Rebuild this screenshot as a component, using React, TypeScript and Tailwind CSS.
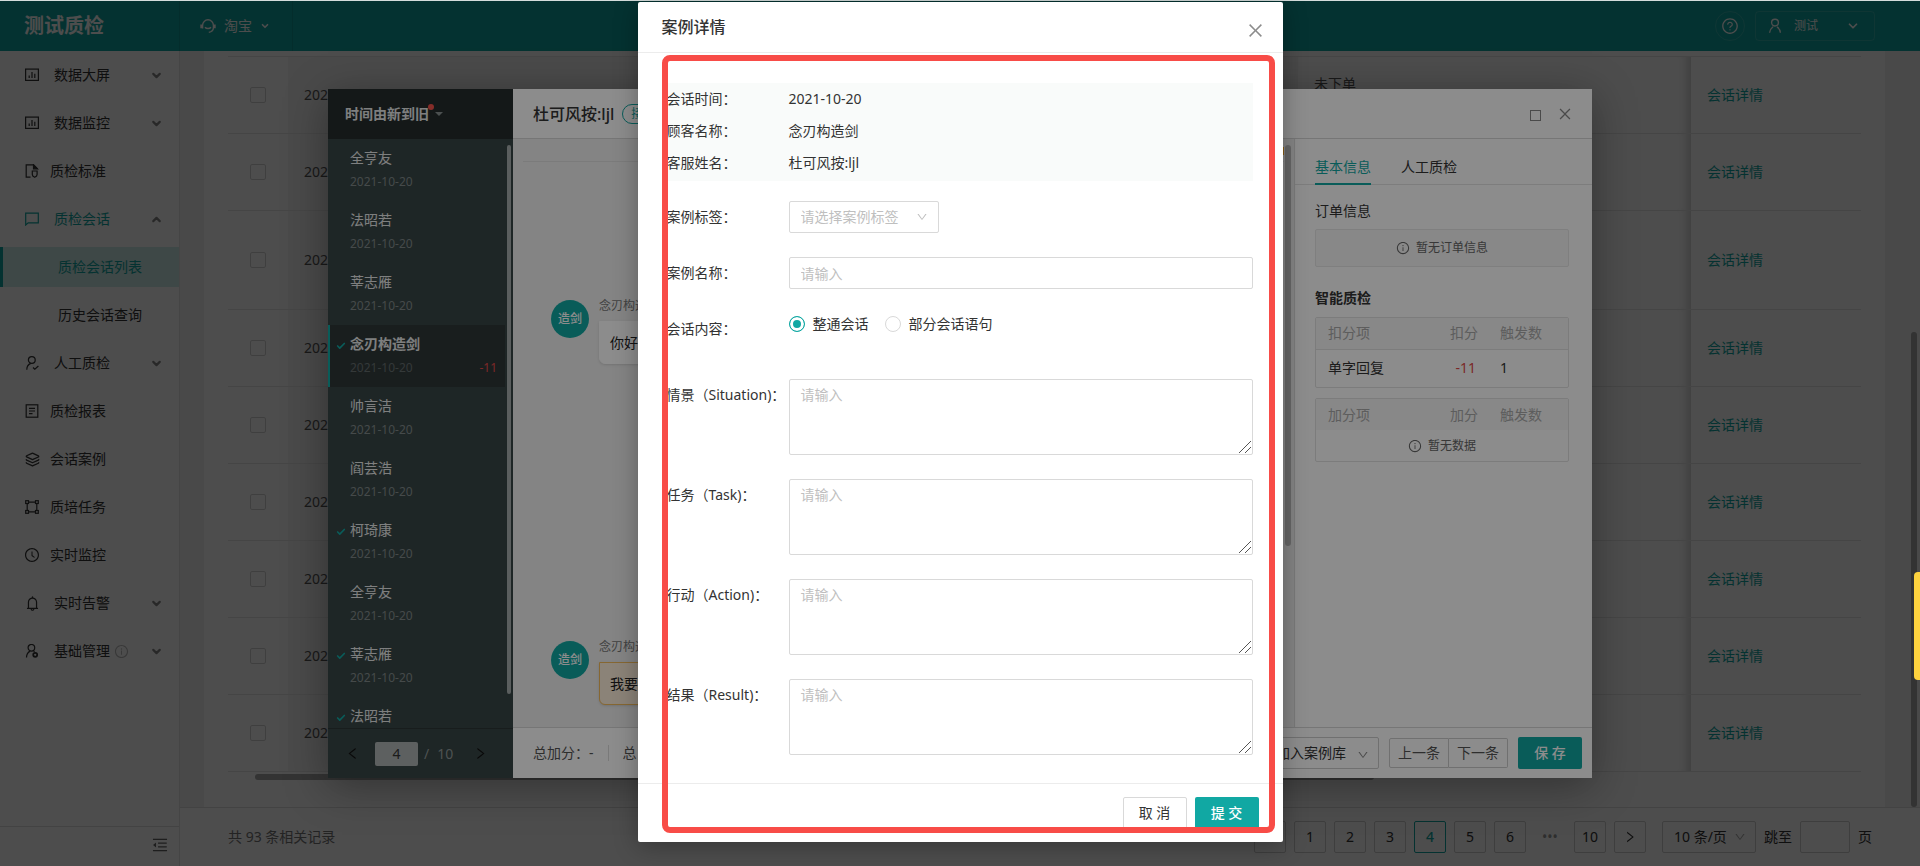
import type { ReactNode } from "react";
import {
  AiOutlineBell,
  AiOutlineClockCircle,
  AiOutlineClose,
  AiOutlineDown,
  AiOutlineInfoCircle,
  AiOutlineLeft,
  AiOutlineMenuFold,
  AiOutlineQuestionCircle,
  AiOutlineRight,
} from "react-icons/ai";
import { Check, ChevronDown, ChevronUp, Layers } from "lucide-react";

const Svg = ({ children }: { children: ReactNode }) => (
  <svg viewBox="0 0 14 14" className="h-3.5 w-3.5" fill="none" stroke="currentColor" strokeWidth="1.2">
    {children}
  </svg>
);

const ChartIcon = () => (
  <Svg>
    <rect x="0.6" y="1.1" width="12.8" height="11.3" />
    <path d="M4.2 10V7.5M7 10V4M9.8 10V5.8" />
  </Svg>
);

const StandardIcon = () => (
  <Svg>
    <path d="M5.5 13.2H1.2V.8h7.3l4 4" />
    <path d="M8.5.8v4h4z" fill="currentColor" />
    <path d="M7.3 7h4.8v3.4c0 1.5-1 2.3-2.4 2.9-1.4-.6-2.4-1.4-2.4-2.9z" />
  </Svg>
);

const ChatIcon = () => (
  <Svg>
    <path d="M.7 1.2h12.6v9.6H3.2L.7 13z" />
  </Svg>
);

const UserCheckIcon = () => (
  <Svg>
    <circle cx="6.8" cy="4" r="3.4" />
    <path d="M1.8 13.8c0-3 1.4-5.4 4-6.4M8 11.5l1.8 1.7 3.6-3.2" />
  </Svg>
);

const UserCogIcon = () => (
  <Svg>
    <circle cx="6.4" cy="3.8" r="3.3" />
    <path d="M1.5 13.6c0-3.2 1.2-5.4 3.8-6.5M8.6 7.2l1 .6" />
    <circle cx="10.2" cy="10.8" r="2" strokeWidth="1.7" />
  </Svg>
);

const ReportIcon = () => (
  <Svg>
    <rect x="1.2" y="0.8" width="11.6" height="12.4" />
    <path d="M4 4.3h6M4 7h6M4 9.7h3.5" />
  </Svg>
);

const TaskIcon = () => (
  <Svg>
    <path d="M3.5 2.2h7M3.5 11.8h7M2.2 3.5v7M11.8 3.5v7" />
    <rect x="0.7" y="0.7" width="2.8" height="2.8" />
    <rect x="10.5" y="0.7" width="2.8" height="2.8" />
    <rect x="0.7" y="10.5" width="2.8" height="2.8" />
    <rect x="10.5" y="10.5" width="2.8" height="2.8" />
  </Svg>
);

const HeadsetIcon = () => (
  <svg viewBox="0 0 16 16" className="h-4 w-4" fill="none" stroke="currentColor" strokeWidth="1.4">
    <path d="M2.6 10.6V7.2a5.4 5.4 0 0 1 10.8 0v2.6c0 2.6-1.5 4-4.6 4.6M5 9.2c1.4 1.8 4.6 1.8 6 0" />
    <path d="M1.2 6.6v3.6M14.8 6.6v3.6" strokeWidth="1.8" />
  </svg>
);

const UserIcon = () => (
  <svg viewBox="0 0 14 16" className="h-4 w-3.5" fill="none" stroke="currentColor" strokeWidth="1.4">
    <circle cx="7" cy="4.6" r="3.4" />
    <path d="M1.6 14.8c.2-2.8 1.6-4.6 3.4-6M12.4 14.8c-.2-2.8-1.6-4.6-3.4-6" />
  </svg>
);

type MenuItem = { label: string; icon: ReactNode; arrow?: "up" | "down"; info?: boolean; children?: string[] };

const menu: MenuItem[] = [
  { label: "数据大屏", icon: <ChartIcon />, arrow: "down" },
  { label: "数据监控", icon: <ChartIcon />, arrow: "down" },
  { label: "质检标准", icon: <StandardIcon /> },
  { label: "质检会话", icon: <ChatIcon />, arrow: "up", children: ["质检会话列表", "历史会话查询"] },
  { label: "人工质检", icon: <UserCheckIcon />, arrow: "down" },
  { label: "质检报表", icon: <ReportIcon /> },
  { label: "会话案例", icon: <Layers size={15} className="shrink-0" /> },
  { label: "质培任务", icon: <TaskIcon /> },
  { label: "实时监控", icon: <AiOutlineClockCircle size={16} className="shrink-0" /> },
  { label: "实时告警", icon: <AiOutlineBell size={17} className="shrink-0" />, arrow: "down" },
  { label: "基础管理", icon: <UserCogIcon />, arrow: "down", info: true },
];

const sessions = [
  { name: "全亨友" },
  { name: "法昭若" },
  { name: "莘志雁" },
  { name: "念刃构造剑", checked: true, active: true, score: "-11" },
  { name: "帅言洁" },
  { name: "阎芸浩" },
  { name: "柯琦康", checked: true },
  { name: "全亨友" },
  { name: "莘志雁", checked: true },
  { name: "法昭若", checked: true },
];

const caseFields = [
  { id: "situation", label: "情景（Situation)：" },
  { id: "task", label: "任务（Task)：" },
  { id: "action", label: "行动（Action)：" },
  { id: "result", label: "结果（Result)：" },
];

const Header = () => (
  <header className="flex h-[50px] shrink-0 items-center bg-[#11a8a3] text-white">
    <h1 className="flex h-full w-[180px] items-center border-r border-black/10 pl-6 text-xl font-bold">测试质检</h1>
    <button className="flex h-full w-[113px] items-center border-r border-black/10 pl-5 text-sm">
      <HeadsetIcon />
      <span className="ml-2">淘宝</span>
      <ChevronDown size={10} strokeWidth={4} className="ml-2" />
    </button>
    <div className="ml-auto flex items-center gap-2.5 pr-[45px]">
      <button aria-label="帮助" className="flex h-[30px] w-[30px] items-center justify-center rounded-full border border-white/15">
        <AiOutlineQuestionCircle size={18} />
      </button>
      <button className="flex h-[30px] w-[120px] items-center rounded border border-white/15 pr-3.5 pl-3 text-xs">
        <UserIcon />
        <span className="ml-3">测试</span>
        <ChevronDown size={14} strokeWidth={3} className="ml-auto" />
      </button>
    </div>
  </header>
);

const Sidebar = () => (
  <aside className="flex w-[180px] shrink-0 flex-col border-r border-[#e8e8e8] bg-white text-sm text-[#333]">
    <nav className="flex flex-1 flex-col gap-2 pt-1">
      {menu.map((item) => (
        <div key={item.label} className="flex flex-col gap-2">
          <a
            href="#"
            className={`flex h-10 items-center pr-4 pl-[25px] ${item.children ? "text-[#11a8a3]" : ""}`}
          >
            <span className="flex w-3.5 shrink-0 justify-center">{item.icon}</span>
            <span className={item.arrow ? "ml-[15px]" : "ml-[11px]"}>{item.label}</span>
            {item.info && <AiOutlineInfoCircle size={15} className="ml-1 text-[#bbb]" />}
            {item.arrow === "down" && <ChevronDown size={13} strokeWidth={4} className="ml-auto text-[#888]" />}
            {item.arrow === "up" && <ChevronUp size={13} strokeWidth={4} className="ml-auto text-[#888]" />}
          </a>
          {item.children?.map((child, i) => (
            <a
              key={child}
              href="#"
              className={`flex h-10 items-center border-l-[3px] pl-[55px] ${
                i === 0 ? "border-[#11a8a3] bg-[#cfeeeb] text-[#11a8a3]" : "border-transparent"
              }`}
            >
              {child}
            </a>
          ))}
        </div>
      ))}
    </nav>
    <div className="flex h-10 items-center justify-end border-t border-[#e0e0e0] pr-2.5 pb-1">
      <button aria-label="收起菜单">
        <AiOutlineMenuFold size={18} className="text-[#666]" />
      </button>
    </div>
  </aside>
);

const PageButton = ({ children, active, label }: { children: ReactNode; active?: boolean; label?: string }) => (
  <button
    aria-label={label}
    className={`flex h-8 w-8 items-center justify-center rounded-xs border ${
      active ? "border-[#11a8a3] font-medium text-[#11a8a3]" : "border-[#d0d0d0]"
    }`}
  >
    {children}
  </button>
);

const RecordList = () => (
  <main className="relative flex min-w-0 flex-1 flex-col bg-[#f2f2f2] text-sm text-[#555]">
    <div className="min-h-0 flex-1 overflow-hidden pr-[35px] pl-6">
      <div className="h-full bg-white px-6 pt-[5px]">
        <div className="border-t border-[#e8e8e8]">
          <table className="w-full table-fixed border-separate border-spacing-0">
            <colgroup>
              <col className="w-[60px]" />
              <col />
              <col className="w-[393px]" />
              <col className="w-[170px]" />
            </colgroup>
            <tbody>
              {Array.from({ length: 9 }, (_, i) => (
                <tr key={i} className={i === 2 ? "h-[99px]" : "h-[77px]"}>
                  <td className="border-b border-[#e8e8e8] pl-[22px]">
                    <input
                      type="checkbox"
                      aria-label="选择会话"
                      className="block h-4 w-4 appearance-none rounded-xs border border-[#d4d4d4]"
                    />
                  </td>
                  <td className="border-b border-[#e8e8e8] bg-[#f6f6f6] px-4">2021-10-20</td>
                  <td className="border-b border-[#e8e8e8] px-4 pb-[22px] shadow-[inset_-12px_0_8px_-8px_rgba(0,0,0,0.18)]">
                    {i === 0 && "未下单"}
                  </td>
                  <td className="border-b border-[#e8e8e8] pl-4">
                    <a href="#" className="text-[#11a8a3]">会话详情</a>
                  </td>
                </tr>
              ))}
            </tbody>
          </table>
          <div className="mt-0.5 ml-[27px] h-1.5 w-[68.5%] rounded-full bg-[#aaa]" />
        </div>
      </div>
    </div>
    <div className="absolute top-[281px] right-[3px] bottom-[59px] w-1.5 rounded-full bg-[#aaa]" />
    <footer className="flex h-[59px] shrink-0 items-center border-t border-[#e0e0e0] bg-white px-12 text-[#333]">
      <span className="text-[#777]">共 93 条相关记录</span>
      <div className="ml-auto flex items-center gap-2">
        <PageButton label="上一页">
          <AiOutlineLeft size={14} />
        </PageButton>
        <PageButton>1</PageButton>
        <PageButton>2</PageButton>
        <PageButton>3</PageButton>
        <PageButton active>4</PageButton>
        <PageButton>5</PageButton>
        <PageButton>6</PageButton>
        <span className="w-8 text-center text-[#999]">•••</span>
        <PageButton>10</PageButton>
        <PageButton label="下一页">
          <AiOutlineRight size={14} />
        </PageButton>
        <div className="relative ml-2">
          <select aria-label="每页条数" className="h-8 w-[94px] appearance-none rounded-xs border border-[#d0d0d0] pl-[11px]">
            <option>10 条/页</option>
          </select>
          <AiOutlineDown size={12} className="pointer-events-none absolute top-2.5 right-2.5 text-[#aaa]" />
        </div>
        <label htmlFor="jump">跳至</label>
        <input id="jump" className="h-8 w-[50px] rounded-xs border border-[#d0d0d0]" />
        <span>页</span>
      </div>
    </footer>
  </main>
);

const SessionList = () => (
  <section className="flex w-[185px] shrink-0 flex-col bg-[#384545] text-[#e6e8e8]">
    <div className="flex h-[50px] shrink-0 items-center bg-[#252d2d] pl-[17px] text-sm font-bold">
      <button className="relative flex items-center">
        时间由新到旧
        <span className="absolute top-0 left-[83px] h-1.5 w-1.5 rounded-full bg-[#f5524b]" />
        <svg viewBox="0 0 8 4" className="ml-1.5 h-1 w-2 fill-[#8a9292]">
          <path d="M0 0h8L4 4z" />
        </svg>
      </button>
    </div>
    <div className="relative min-h-0 flex-1 overflow-hidden pr-2">
      {sessions.map((s, i) => (
        <a
          key={i}
          href="#"
          className={`relative flex h-[62px] flex-col justify-center gap-1 border-l-2 pr-2 pl-5 ${
            s.active ? "border-[#11a8a3] bg-[#2f3738]" : "border-transparent"
          }`}
        >
          {s.checked && <Check size={10} strokeWidth={4} className="absolute top-4 left-1.5 text-[#11a8a3]" />}
          <span className={`text-sm leading-5 ${s.active ? "font-bold" : ""}`}>{s.name}</span>
          <span className={`flex justify-between text-xs leading-5 ${s.active ? "text-[#5f6868]" : "text-[#7e8888]"}`}>
            2021-10-20
            <span className="text-[#e04a4a]">{s.score}</span>
          </span>
        </a>
      ))}
      <div className="absolute top-1.5 right-0.5 bottom-[34px] w-1 rounded-full bg-[#a5acac]" />
    </div>
    <div className="flex h-[50px] shrink-0 items-center border-t border-[#2c3636] pl-[17px] text-sm text-[#8d9696]">
      <button aria-label="上一页" className="text-[#111]">
        <AiOutlineLeft size={15} />
      </button>
      <input
        aria-label="页码"
        defaultValue="4"
        className="ml-[15px] h-6 w-[43px] rounded-xs bg-[#a9b0b0] text-center text-[#333]"
      />
      <span className="ml-1.5">/</span>
      <span className="ml-2">10</span>
      <button aria-label="下一页" className="ml-5 text-[#111]">
        <AiOutlineRight size={15} />
      </button>
    </div>
  </section>
);

const Message = ({ text, marked }: { text: string; marked?: boolean }) => (
  <div className="flex gap-2.5">
    <div className="flex h-[38px] w-[38px] shrink-0 items-center justify-center rounded-full bg-[#11a8a3] text-xs font-medium text-white">
      造剑
    </div>
    <div>
      <div className="h-[21px] text-xs leading-3 text-[#777]">念刃构造剑</div>
      <div
        className={`flex h-[43px] items-center rounded-md rounded-tl-none border px-2.5 text-sm text-[#222] shadow-sm ${
          marked ? "border-[#f5bc5c] bg-[#fdeedb]" : "border-white bg-white"
        }`}
      >
        {text}
      </div>
    </div>
  </div>
);

const Chat = () => (
  <section className="relative flex flex-1 flex-col overflow-hidden bg-[#f0f0f0] px-2.5">
    <div className="h-[23px] shrink-0 border-b border-[#e0e0e0]" />
    <div className="flex flex-col gap-[277px] pt-[138px] pl-7">
      <Message text="你好" />
      <Message text="我要" marked />
    </div>
    <div className="absolute top-2 right-2.5 h-2 w-4 bg-[#f5a623]" />
    <div className="absolute top-1.5 right-[3px] h-[401px] w-1.5 rounded-full bg-[#bbb]" />
  </section>
);

const ScoreTable = ({ kind, children }: { kind: string; children: ReactNode }) => (
  <div className="overflow-hidden rounded-xs border border-[#e2e2e2]">
    <table className="w-full table-fixed border-collapse text-left text-sm">
      <thead className="bg-[#f7f7f7] text-[#aaa]">
        <tr className="h-[31px]">
          <th className="pl-3 font-normal">{kind}分项</th>
          <th className="w-[60px] pr-[22px] text-right font-normal whitespace-nowrap">{kind}分</th>
          <th className="w-[68px] font-normal">触发数</th>
        </tr>
      </thead>
      <tbody>{children}</tbody>
    </table>
  </div>
);

const InfoPanel = () => (
  <section className="w-[298px] shrink-0 border-l border-[#dcdcdc] bg-white text-sm text-[#333]">
    <div role="tablist" className="flex h-[46px] gap-[30px] border-b border-[#e4e4e4] px-5 pt-[11px]">
      <button role="tab" aria-selected="true" className="h-[35px] border-b-2 border-[#11a8a3] text-[#11a8a3]">
        基本信息
      </button>
      <button role="tab" aria-selected="false" className="h-[35px] border-b-2 border-transparent">
        人工质检
      </button>
    </div>
    <div className="pr-[23px] pl-5">
      <h3 className="pt-4 leading-5">订单信息</h3>
      <div className="mt-2 flex h-[38px] items-center justify-center gap-1.5 rounded-xs border border-[#e8e8e8] bg-[#f7f7f7] text-xs text-[#666]">
        <AiOutlineInfoCircle size={14} />
        暂无订单信息
      </div>
      <h3 className="mt-[21px] mb-[9px] leading-5 font-bold">智能质检</h3>
      <div className="flex flex-col gap-2.5">
        <ScoreTable kind="扣">
          <tr className="h-[38px] border-t border-[#e2e2e2]">
            <td className="pl-3">单字回复</td>
            <td className="pr-6 text-right text-[#e04a4a]">-11</td>
            <td>1</td>
          </tr>
        </ScoreTable>
        <ScoreTable kind="加">
          <tr className="h-[31px]">
            <td colSpan={3} className="text-xs text-[#666]">
              <span className="flex items-center justify-center gap-1.5">
                <AiOutlineInfoCircle size={14} />
                暂无数据
              </span>
            </td>
          </tr>
        </ScoreTable>
      </div>
    </div>
  </section>
);

const SessionDialog = () => (
  <div className="absolute inset-0 flex justify-center bg-black/45 px-8 pt-[88px] pb-[88px]">
    <div className="flex w-full max-w-[1264px] overflow-hidden bg-white shadow-[0_8px_40px_rgba(0,0,0,0.35)]">
      <SessionList />
      <div className="flex min-w-0 flex-1 flex-col">
        <div className="flex h-[50px] shrink-0 items-center border-b border-[#d8d8d8] pr-[19px] pl-5">
          <h2 className="text-base font-medium text-[#333]">杜可风按:ljl</h2>
          <span className="ml-2 rounded-full border border-[#11a8a3] px-2 text-xs leading-[18px] text-[#11a8a3]">接</span>
          <button aria-label="最大化" className="mt-1 ml-auto h-[11px] w-[11px] border border-[#888]" />
          <button aria-label="关闭" className="ml-4 text-[#888]">
            <AiOutlineClose size={16} />
          </button>
        </div>
        <div className="flex min-h-0 flex-1">
          <Chat />
          <InfoPanel />
        </div>
        <div className="flex h-[51px] shrink-0 items-center border-t border-[#d8d8d8] pr-2.5 pl-5 text-sm text-[#555]">
          <span>总加分：-</span>
          <span className="mx-3.5 h-4 w-px bg-[#ddd]" />
          <span>总</span>
          <div className="relative ml-auto">
            <select aria-label="加入案例库" className="h-8 w-[122px] appearance-none rounded-xs border border-[#ccc] pl-[18px] text-[#333]">
              <option>加入案例库</option>
            </select>
            <AiOutlineDown size={12} className="pointer-events-none absolute top-3 right-2.5 text-[#888]" />
          </div>
          <div className="ml-2.5 flex">
            <button className="h-[30px] w-[60px] rounded-l-xs border border-[#ccc]">上一条</button>
            <button className="h-[30px] w-[59px] rounded-r-xs border border-l-0 border-[#ccc]">下一条</button>
          </div>
          <button className="ml-2.5 h-8 w-16 rounded-xs bg-[#11a8a3] font-medium text-white">保 存</button>
        </div>
      </div>
    </div>
  </div>
);

const FormRow = ({ label, htmlFor, children }: { label: string; htmlFor?: string; children: ReactNode }) => (
  <div className="flex items-start">
    <label htmlFor={htmlFor} className="w-[122px] shrink-0 leading-8 whitespace-nowrap">
      {label}
    </label>
    <div className="min-w-0 flex-1">{children}</div>
  </div>
);

const CaseDialog = () => (
  <div className="absolute inset-0 flex items-start justify-center bg-black/45 pt-px">
    <div
      role="dialog"
      aria-labelledby="case-title"
      className="relative w-full max-w-[645px] rounded-xs bg-white text-sm text-[#333] shadow-[0_4px_24px_rgba(0,0,0,0.3)]"
    >
      <div className="flex h-[51px] items-center justify-between border-b border-[#ececec] pr-[18px] pl-6">
        <h2 id="case-title" className="text-base font-medium">案例详情</h2>
        <button aria-label="关闭" className="mt-1.5 text-[#8c8c8c]">
          <AiOutlineClose size={19} />
        </button>
      </div>
      <form className="pt-[30px] pr-[30px] pb-7 pl-[29px]">
        <dl className="grid grid-cols-[122px_1fr] bg-[#f9fbfa] pb-0.5 leading-8">
          <dt>会话时间：</dt>
          <dd>2021-10-20</dd>
          <dt>顾客名称：</dt>
          <dd>念刃构造剑</dd>
          <dt>客服姓名：</dt>
          <dd>杜可风按:ljl</dd>
        </dl>
        <div className="flex flex-col gap-6 pt-5">
          <FormRow label="案例标签：" htmlFor="tag">
            <div className="relative h-8 w-[150px]">
              <select id="tag" className="h-8 w-full appearance-none rounded-xs border border-[#d9d9d9] pl-[11px] text-[#bfbfbf]">
                <option>请选择案例标签</option>
              </select>
              <AiOutlineDown size={12} className="pointer-events-none absolute top-2.5 right-[11px] text-[#bfbfbf]" />
            </div>
          </FormRow>
          <FormRow label="案例名称：" htmlFor="name">
            <input
              id="name"
              placeholder="请输入"
              className="block h-8 w-full rounded-xs border border-[#d9d9d9] px-[11px] placeholder:text-[#bfbfbf]"
            />
          </FormRow>
          <div className="pb-2.5">
            <FormRow label="会话内容：">
              <div className="flex gap-4 leading-[22px]">
                <label className="flex items-center gap-2">
                  <input
                    type="radio"
                    name="scope"
                    defaultChecked
                    className="h-4 w-4 appearance-none rounded-full border border-[#d9d9d9] checked:border-[#11a8a3] checked:bg-[#11a8a3] checked:shadow-[inset_0_0_0_3px_#fff]"
                  />
                  整通会话
                </label>
                <label className="flex items-center gap-2">
                  <input
                    type="radio"
                    name="scope"
                    className="h-4 w-4 appearance-none rounded-full border border-[#d9d9d9] checked:border-[#11a8a3] checked:bg-[#11a8a3] checked:shadow-[inset_0_0_0_3px_#fff]"
                  />
                  部分会话语句
                </label>
              </div>
            </FormRow>
          </div>
          {caseFields.map((f) => (
            <FormRow key={f.id} label={f.label} htmlFor={f.id}>
              <div className="relative">
                <textarea
                  id={f.id}
                  placeholder="请输入"
                  className="block h-[76px] w-full resize-y rounded-xs border border-[#d9d9d9] px-[11px] py-1 leading-[22px] placeholder:text-[#bfbfbf] [&::-webkit-resizer]:hidden"
                />
                <svg
                  viewBox="0 0 12 12"
                  className="pointer-events-none absolute right-0.5 bottom-0.5 h-3 w-3"
                  fill="none"
                  stroke="#555"
                >
                  <path d="M0 12 12 0M6 12l6-6" />
                </svg>
              </div>
            </FormRow>
          ))}
        </div>
      </form>
      <div className="flex justify-end gap-2 border-t border-[#ececec] px-6 py-[13px]">
        <button className="h-8 w-16 rounded-xs border border-[#d9d9d9]">取 消</button>
        <button className="h-8 w-16 rounded-xs bg-[#11a8a3] font-medium text-white">提 交</button>
      </div>
      {/* Highlight frame over the form */}
      <div className="pointer-events-none absolute top-[53px] right-2 bottom-[9px] left-6 rounded-lg border-6 border-[#f84c47]" />
    </div>
  </div>
);

const App = () => {
  return (
    <div className="flex h-screen flex-col overflow-hidden bg-[#d5dddc] pt-px font-['Noto_Sans','Noto_Sans_CJK_SC',sans-serif]">
      <div className="relative flex min-h-0 flex-1 flex-col">
        <Header />
        <div className="flex min-h-0 flex-1">
          <Sidebar />
          <RecordList />
        </div>
        <SessionDialog />
        <CaseDialog />
        <div className="absolute right-0 bottom-[186px] h-[108px] w-1.5 rounded-l bg-[#fdd23e]" />
      </div>
    </div>
  );
};

export default App;
